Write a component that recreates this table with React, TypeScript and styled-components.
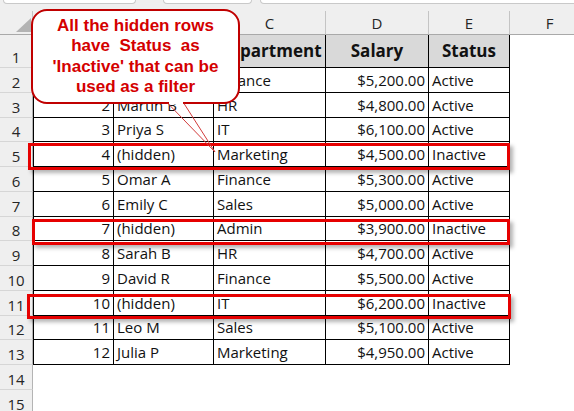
import React from "react";
import styled, { createGlobalStyle } from "styled-components";

const GlobalStyle = createGlobalStyle`
  html, body { margin: 0; padding: 0; background: #ffffff; }
  body { font-family: "Open Sans", "Liberation Sans", sans-serif; }
`;

const Page = styled.div`
  position: relative;
  width: 574px;
  height: 411px;
  overflow: hidden;
  background: #ffffff;
`;

const TopBar = styled.div`
  height: 11px;
  background: #efefef;
  display: flex;
  align-items: flex-start;
  padding-left: 3px;
`;

const TopBox = styled.div<{ $w?: number; $ml?: number }>`
  box-sizing: border-box;
  height: 4px;
  ${(p) => (p.$w ? `width: ${p.$w}px; flex: none;` : `flex: 1; margin-right: -10px;`)}
  margin-left: ${(p) => p.$ml ?? 0}px;
  background: #ffffff;
  border: 1px solid #c9c9c9;
  border-top: none;
  border-radius: 0 0 5px 5px;
`;

const Sheet = styled.div`
  display: grid;
  grid-template-columns: 33px 81px 100px 112px 103px 81px 80px;
  grid-template-rows: 24px 33px repeat(14, 24.75px);
  font-size: 15px;
  line-height: 20px;
`;

const Corner = styled.div`
  box-sizing: border-box;
  background: #efefef;
  border-right: 1px solid #c4c4c4;
  border-bottom: 1px solid #a9a9a9;
  display: flex;
  align-items: flex-end;
  justify-content: flex-end;
  padding: 0 1px 2px 0;
`;

const ColHead = styled.div`
  box-sizing: border-box;
  background: #efefef;
  border-right: 1px solid #c4c4c4;
  border-bottom: 1px solid #a9a9a9;
  display: flex;
  align-items: center;
  justify-content: center;
  color: #262626;
`;

const RowHead = styled.div`
  box-sizing: border-box;
  background: #efefef;
  border-right: 1px solid #b4b4b4;
  border-bottom: 1px solid #d6d6d6;
  display: flex;
  align-items: flex-end;
  justify-content: center;
  color: #262626;
`;

const Cell = styled.div<{ $head?: boolean; $right?: boolean; $first?: boolean }>`
  box-sizing: border-box;
  min-width: 0;
  overflow: hidden;
  white-space: nowrap;
  display: flex;
  align-items: center;
  padding: 0 3px;
  color: #111111;
  border-right: 1px solid #000000;
  border-bottom: 1px solid #000000;
  border-left: ${(p) => (p.$first ? "1px solid #000000" : "none")};
  justify-content: ${(p) => (p.$head ? "center" : p.$right ? "flex-end" : "flex-start")};
  background: ${(p) => (p.$head ? "#d9d9d9" : "#ffffff")};
  font-weight: ${(p) => (p.$head ? 700 : 400)};
  font-size: ${(p) => (p.$head ? "17px" : "15px")};
`;

const Blank = styled.div`
  background: #ffffff;
`;

const Highlight = styled.div<{ $x: number; $y: number; $w: number; $h: number }>`
  position: absolute;
  box-sizing: border-box;
  left: ${(p) => p.$x}px;
  top: ${(p) => p.$y}px;
  width: ${(p) => p.$w}px;
  height: ${(p) => p.$h}px;
  border: 3px solid #e60000;
  box-shadow: 3px 3px 4px rgba(0, 0, 0, 0.3);
`;

const Callout = styled.div`
  position: absolute;
  left: 31px;
  top: 9px;
  width: 209px;
  height: 95px;
  box-sizing: border-box;
  border: 2px solid #c00000;
  border-radius: 16px;
  background: #ffffff;
  display: flex;
  flex-direction: column;
  align-items: center;
  justify-content: center;
  font-family: "Liberation Sans", Arial, sans-serif;
  font-weight: 700;
  font-size: 17px;
  line-height: 20.3px;
  color: #d40000;
  white-space: pre;
  text-align: center;
`;

const Tail = styled.svg`
  position: absolute;
  left: 160px;
  top: 100px;
  width: 60px;
  height: 56px;
  overflow: visible;
`;

type Row = [string, string, string, string, string];

const rows: Row[] = [
  ["1", "", "Finance", "$5,200.00", "Active"],
  ["2", "Martin B", "HR", "$4,800.00", "Active"],
  ["3", "Priya S", "IT", "$6,100.00", "Active"],
  ["4", "(hidden)", "Marketing", "$4,500.00", "Inactive"],
  ["5", "Omar A", "Finance", "$5,300.00", "Active"],
  ["6", "Emily C", "Sales", "$5,000.00", "Active"],
  ["7", "(hidden)", "Admin", "$3,900.00", "Inactive"],
  ["8", "Sarah B", "HR", "$4,700.00", "Active"],
  ["9", "David R", "Finance", "$5,500.00", "Active"],
  ["10", "(hidden)", "IT", "$6,200.00", "Inactive"],
  ["11", "Leo M", "Sales", "$5,100.00", "Active"],
  ["12", "Julia P", "Marketing", "$4,950.00", "Active"],
];

const headers = ["", "", "Department", "Salary", "Status"];
const letters = ["", "", "C", "D", "E", "F"];

export default function App() {
  return (
    <>
      <GlobalStyle />
      <Page>
        <TopBar>
          <TopBox $w={133} />
          <TopBox $w={89} $ml={27} />
          <TopBox $ml={8} />
        </TopBar>
        <Sheet>
          <Corner>
            <svg width="15" height="14" viewBox="0 0 15 14">
              <polygon points="0,14 15,0 15,14" fill="#b3b3b3" />
            </svg>
          </Corner>
          {letters.map((l, i) => (
            <ColHead key={i}>{l}</ColHead>
          ))}

          <RowHead>1</RowHead>
          {headers.map((h, i) => (
            <Cell key={i} $head $first={i === 0}>
              {h}
            </Cell>
          ))}
          <Blank />

          {rows.map((r, ri) => (
            <React.Fragment key={ri}>
              <RowHead>{ri + 2}</RowHead>
              <Cell $first $right>
                {r[0]}
              </Cell>
              <Cell>{r[1]}</Cell>
              <Cell>{r[2]}</Cell>
              <Cell $right>{r[3]}</Cell>
              <Cell>{r[4]}</Cell>
              <Blank />
            </React.Fragment>
          ))}

          {[14, 15].map((n) => (
            <React.Fragment key={n}>
              <RowHead>{n}</RowHead>
              <Blank />
              <Blank />
              <Blank />
              <Blank />
              <Blank />
              <Blank />
            </React.Fragment>
          ))}
        </Sheet>

        <Highlight $x={28} $y={143} $w={482} $h={27} />
        <Highlight $x={32} $y={219} $w={478} $h={26} />
        <Highlight $x={27} $y={294} $w={484} $h={25} />

        <Callout>
          <span>All the hidden rows</span>
          <span>have  Status  as</span>
          <span>'Inactive' that can be</span>
          <span>used as a filter</span>
        </Callout>

        <Tail viewBox="0 0 60 56">
          <rect x="9" y="1.5" width="14" height="3" fill="#ffffff" />
          <polyline
            points="8,3.5 55,52 24,3.5"
            fill="none"
            stroke="#d23c3c"
            strokeWidth="1"
          />
        </Tail>
      </Page>
    </>
  );
}
